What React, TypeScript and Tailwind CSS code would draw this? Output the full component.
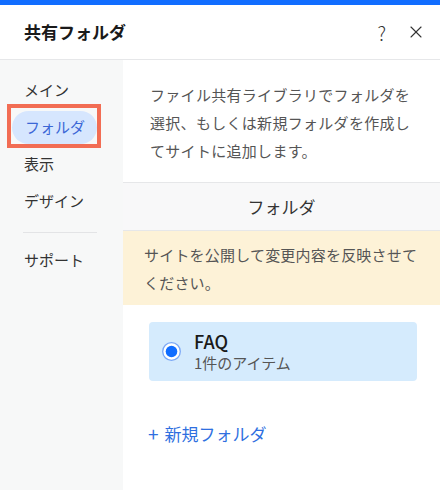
import { X } from "lucide-react";

const font = { fontFamily: '"Noto Sans CJK JP", "Noto Sans", sans-serif' };

function NavItem({ label }: { label: string }) {
  return (
    <div className="flex h-[37px] items-center pl-6 text-[15px] text-[#333]">
      {label}
    </div>
  );
}

function ActiveNavItem({ label }: { label: string }) {
  return (
    <div className="relative flex h-[37px] items-center">
      <div className="ml-3 flex h-[33px] w-[85px] items-center rounded-full bg-[#d6e6fe] pl-[13px] text-[15px] text-[#3b67d6]">
        {label}
      </div>
      {/* annotation box drawn over the active item */}
      <div
        className="pointer-events-none absolute left-[7px] top-[-5px] h-[44px] w-[94px] border-4 border-[#f26d54]"
        aria-hidden
      />
    </div>
  );
}

function Radio() {
  return (
    <svg width="19" height="19" viewBox="0 0 19 19" aria-hidden>
      <circle cx="9.5" cy="9.5" r="8.8" fill="#fff" stroke="#7aa7f6" strokeWidth="1.3" />
      <circle cx="9.5" cy="9.5" r="5.8" fill="#116dff" />
    </svg>
  );
}

export default function App() {
  return (
    <div className="flex h-[490px] w-[440px] flex-col overflow-hidden bg-white" style={font}>
      <div className="h-[5px] bg-[#116dff]" />

      <header className="flex h-[55px] items-center justify-between border-b border-[#e6e7e9] pl-6 pr-[14px]">
        <h1 className="text-[17px] font-bold text-[#1a1a1a]">共有フォルダ</h1>
        <div className="flex items-center gap-[20px] text-[#333]">
          <span className="text-[19px] font-light leading-none">?</span>
          <X size={20} strokeWidth={1.3} />
        </div>
      </header>

      <div className="flex flex-1">
        <nav className="w-[123px] bg-[#f7f8f8] pt-3">
          <NavItem label="メイン" />
          <ActiveNavItem label="フォルダ" />
          <NavItem label="表示" />
          <NavItem label="デザイン" />
          <div className="ml-[23px] mt-3 h-px w-[74px] bg-[#e3e4e6]" />
          <div className="mt-[9px]">
            <NavItem label="サポート" />
          </div>
        </nav>

        <main className="flex flex-1 flex-col bg-white">
          <p className="pb-[17px] pl-[27px] pr-[25px] pt-[21px] text-[15px] leading-[28px] tracking-[0.3px] text-[#555]">
            ファイル共有ライブラリでフォルダを選択、もしくは新規フォルダを作成してサイトに追加します。
          </p>

          <div className="flex h-[49px] items-center justify-center border-y border-[#e6e7e9] bg-[#f8f8f9] text-[17px] text-[#333]">
            フォルダ
          </div>

          <div className="bg-[#fdf2d7] pb-[8px] pl-[21px] pr-[16px] pt-[10px] text-[15px] leading-[28px] tracking-[0.2px] text-[#555]">
            サイトを公開して変更内容を反映させてください。
          </div>

          <div className="ml-[26px] mr-[23px] mt-[17px] flex h-[59px] items-center gap-[13px] rounded-[4px] bg-[#d5ebfd] pl-[13px]">
            <Radio />
            <div className="flex flex-col">
              <span className="text-[18px] font-medium leading-[22px] text-[#1a1a1a]">FAQ</span>
              <span className="text-[15px] leading-[21px] text-[#555]">1件のアイテム</span>
            </div>
          </div>

          <div className="ml-[25px] mt-[40px] flex items-center gap-[6px] text-[17px] text-[#2f6fe0]">
            <span className="text-[19px] leading-none">+</span>
            <span>新規フォルダ</span>
          </div>
        </main>
      </div>
    </div>
  );
}
